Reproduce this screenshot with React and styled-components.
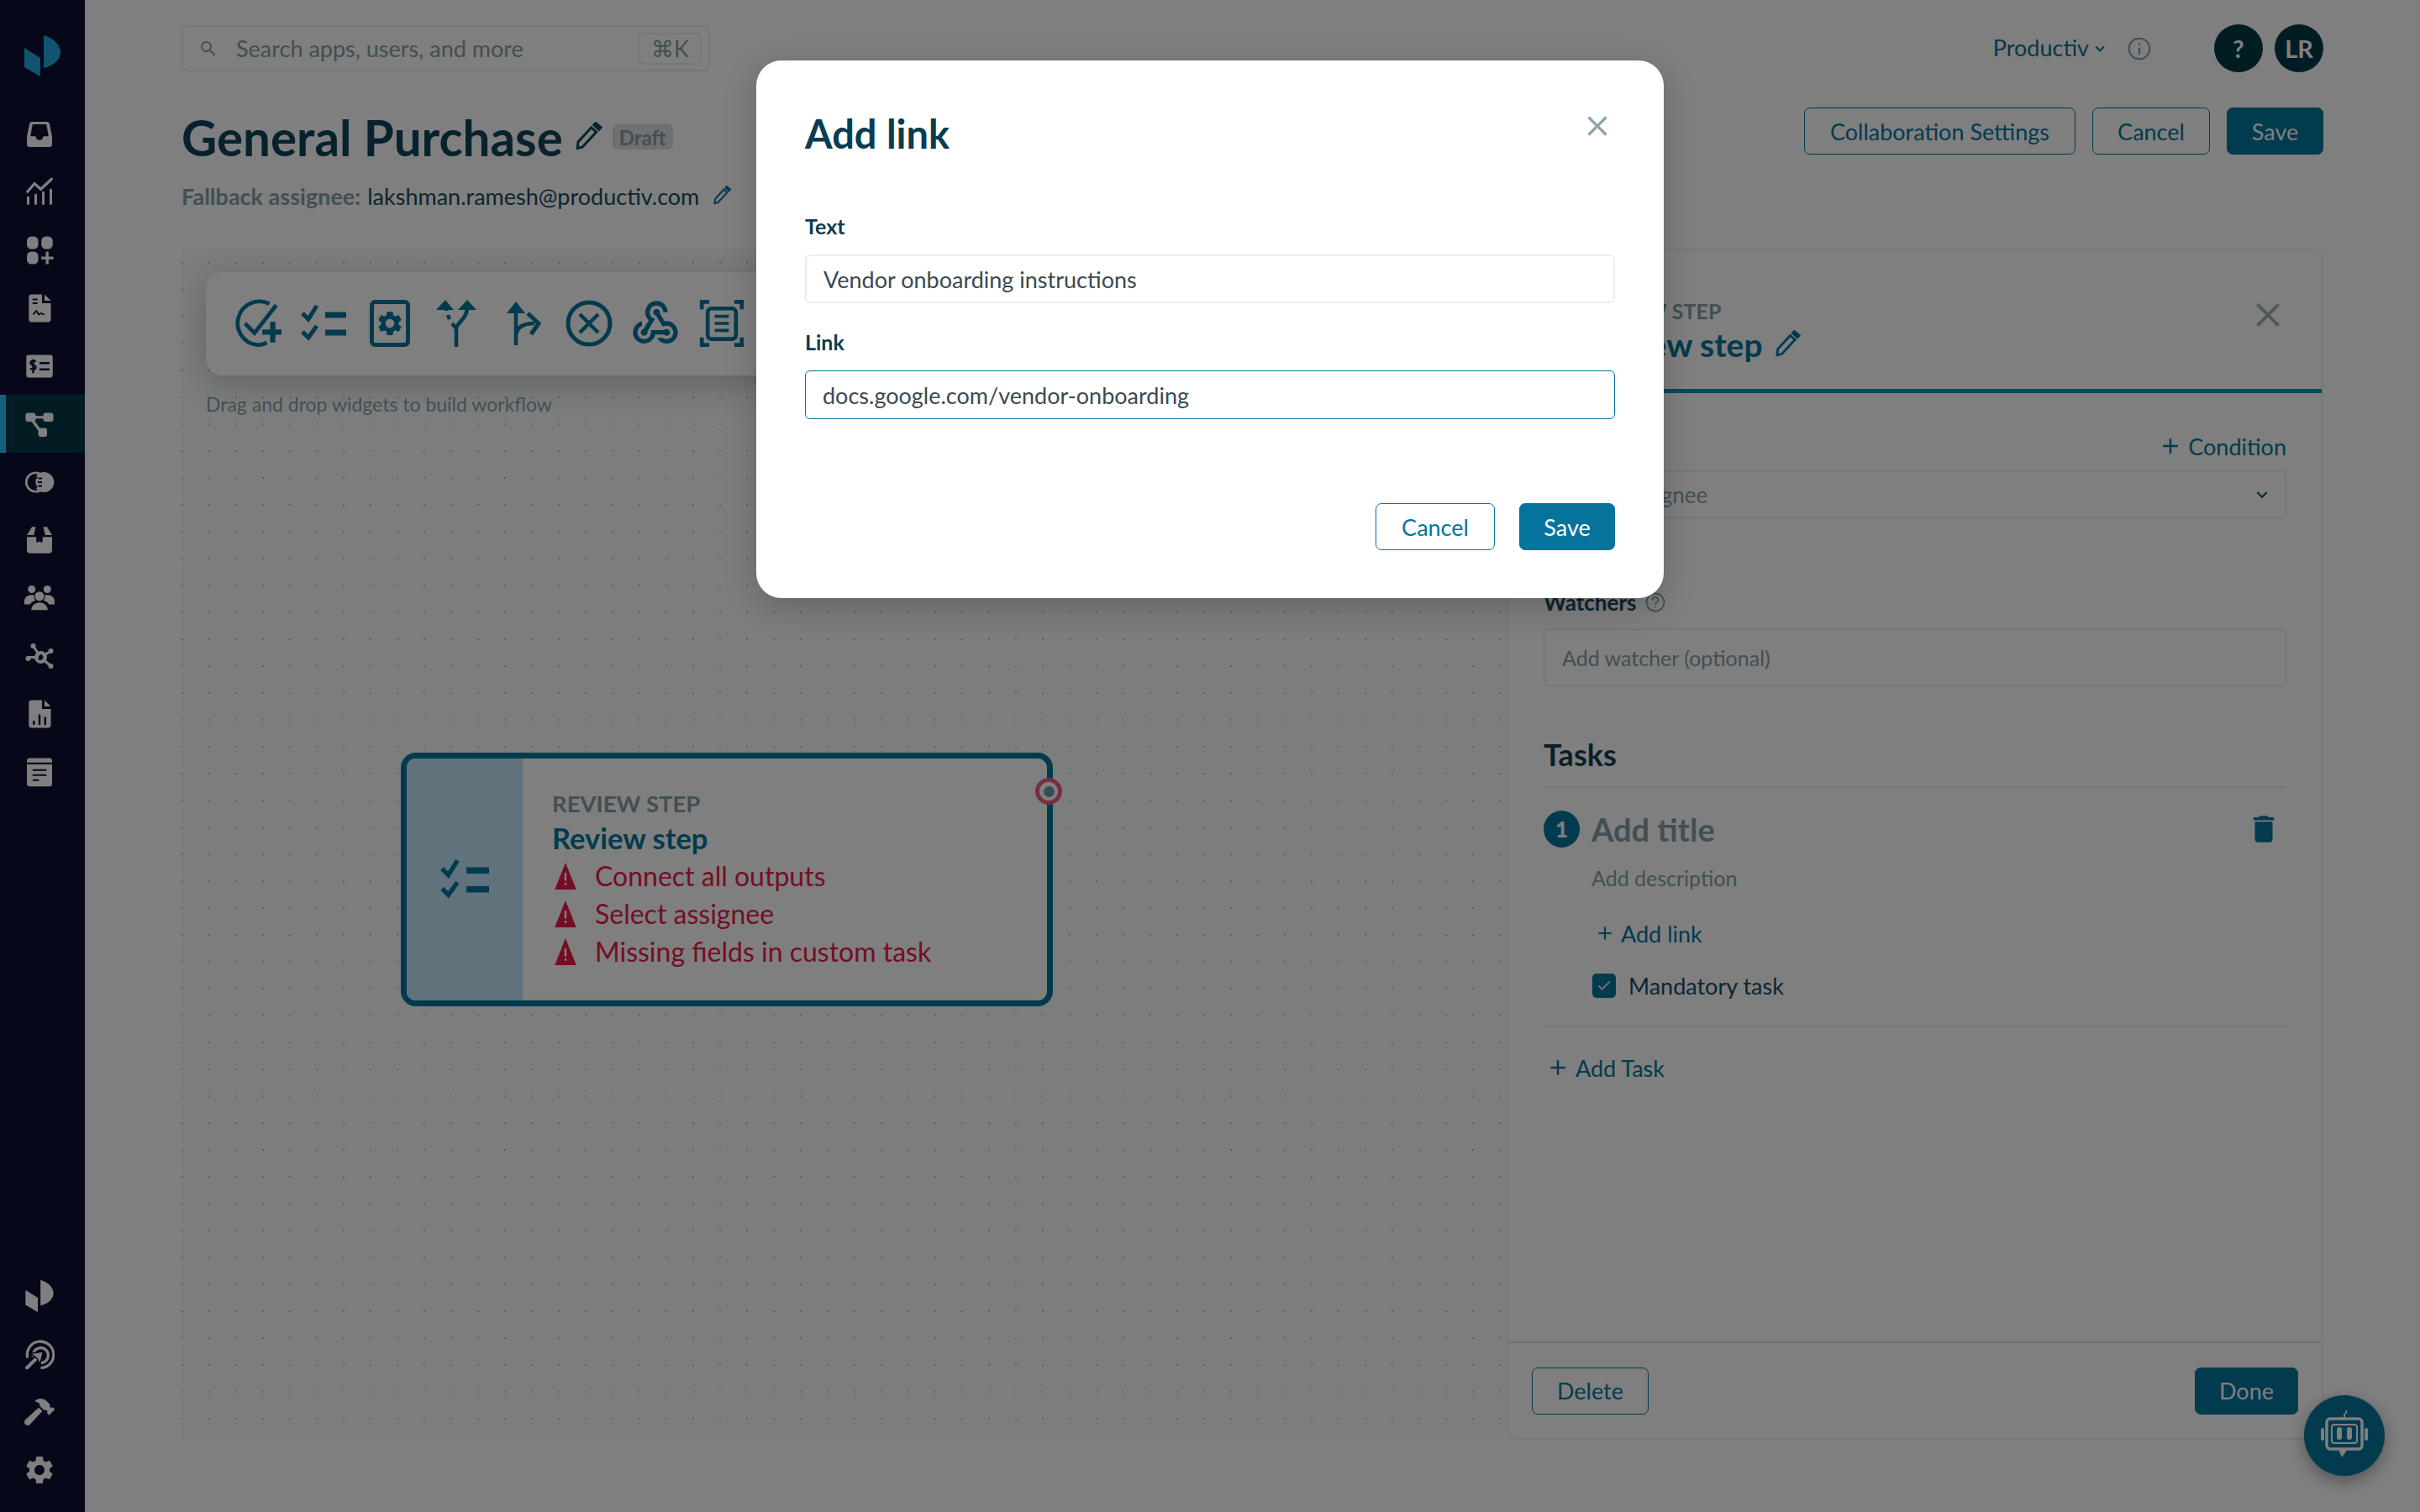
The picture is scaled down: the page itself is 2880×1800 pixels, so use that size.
import React from "react";
import styled, { createGlobalStyle } from "styled-components";
import { MdWebhook, MdDelete, MdSearch, MdKeyboardArrowDown, MdCheck, MdClose, MdAdd, MdSettings } from "react-icons/md";
import { FaHammer } from "react-icons/fa";

const TEAL = "#04749c";
const INK = "#10455a";
const MUTED = "#849ea7";

const GlobalStyle = createGlobalStyle`
  html, body { margin: 0; padding: 0; background: #fff; }
  * { box-sizing: border-box; }
  body { font-family: Lato, "Noto Sans", sans-serif; color: ${INK}; }
`;

const Page = styled.div`
  position: relative;
  display: flex;
  width: 2880px;
  height: 1800px;
  overflow: hidden;
`;

/* sidebar */
const Sidebar = styled.nav`
  width: 101px;
  flex: none;
  display: flex;
  flex-direction: column;
  background: #0c0e32;
  padding-bottom: 16px;
`;
const LogoBox = styled.div`
  height: 125px;
  padding: 42px 0 0 26px;
  display: flex;
  align-items: flex-start;
  color: #22a8e0;
`;
const NavItem = styled.div`
  height: 69px;
  display: flex;
  align-items: center;
  justify-content: center;
  padding-right: 7px;
  color: #fff;
  flex: none;
  ${(p) => p.$active && `background: #043848; box-shadow: inset 7px 0 0 #2abeff;`}
`;
const NavBottom = styled.div`
  margin-top: auto;
  display: flex;
  flex-direction: column;
`;
const Svg = styled.svg`
  width: ${(p) => p.$size || 36}px;
  height: ${(p) => p.$size || 36}px;
  display: block;
  flex: none;
`;

/* icons */
const Logo = ({ size }) => (
  <Svg $size={size} viewBox="0 0 49 49" fill="currentColor">
    <path d="M3 15l19 12v22L3 38z" />
    <path d="M26 0c12 3 20 12 20 20 0 10-10 17-20 19z" />
  </Svg>
);
const Inbox = () => (
  <Svg viewBox="0 0 24 24" fill="currentColor">
    <path fillRule="evenodd" d="M6 2h12c1 0 1.800.7 2 1.700L22 14v6c0 1.100-.9 2-2 2H4c-1.100 0-2-.9-2-2v-6L4 3.700C4.200 2.700 5 2 6 2zm.5 2L4.800 13.500H9c0 1.700 1.300 3 3 3s3-1.300 3-3h4.200L17.500 4z" />
  </Svg>
);
const Analytics = () => (
  <Svg viewBox="0 0 24 24" fill="none" stroke="currentColor" strokeLinecap="round" strokeWidth="2">
    <path d="M3 21v-5M9 21v-7M15 21v-9M21 21V10" />
    <path d="M2.500 11.500L8 5l5 4.500L21.500 1.500" strokeWidth="2.200" />
  </Svg>
);
const Apps = () => (
  <Svg viewBox="0 0 24 24" fill="currentColor">
    <rect x="2" y="1" width="9" height="10" rx="3.500" />
    <rect x="13.500" y="1" width="9" height="10" rx="3.500" />
    <rect x="2" y="13" width="9" height="10" rx="3.500" />
    <path d="M17 13h2.200v4H23v2.200h-3.800V23H17v-3.800h-3.600V17H17z" />
  </Svg>
);
const DocChart = () => (
  <Svg viewBox="0 0 24 24" fill="currentColor">
    <path fillRule="evenodd" d="M5.500 1H14v7h7v13c0 1.100-.9 2-2 2H5.500c-1.100 0-2-.9-2-2V3c0-1.100.9-2 2-2zM16 1l5 5h-5z" />
    <path d="M6.500 5h4M6.500 8h4M7 17l2.500-3 2 3 1.500-1 3 1" stroke="#0c0e32" strokeWidth="1.200" fill="none" />
  </Svg>
);
const Bill = () => (
  <Svg viewBox="0 0 24 24" fill="currentColor">
    <rect x="1.500" y="3" width="21" height="18" rx="2" />
    <path d="M9 8.500C8.500 7.500 5 7.300 5 9.300c0 2.200 4 1.400 4 3.600 0 2-3.500 1.800-4.200.7M7 6.500v11M12 9.500h8M12 14.500h8" stroke="#0c0e32" strokeWidth="1.600" fill="none" />
  </Svg>
);
const Flow = () => (
  <Svg viewBox="0 0 24 24" fill="currentColor">
    <rect x="1" y="3" width="8" height="7" rx="2" />
    <rect x="15" y="3" width="8" height="7" rx="2" />
    <rect x="11" y="15" width="7" height="7" rx="2" />
    <path d="M8 5.500h8v2H8zM7 8l6 8-1.800 1.300-6-8z" />
  </Svg>
);
const Coins = () => (
  <Svg viewBox="0 0 24 24" fill="none">
    <circle cx="9" cy="12" r="7.500" stroke="currentColor" strokeWidth="1.800" />
    <circle cx="15.500" cy="12" r="8" fill="currentColor" />
    <path d="M10 7.500c-2.500 2-2.500 7 0 9" stroke="#0c0e32" strokeWidth="1.500" />
    <path d="M11 9h3M10.500 12h3.500M11 15h3" stroke="#0c0e32" strokeWidth="1.200" />
  </Svg>
);
const Box = () => (
  <Svg viewBox="0 0 24 24" fill="currentColor">
    <path d="M6 1.500h3L7.500 8H2zM18 1.500h-3L16.500 8H22zM2 9.500h7.500V13c0 .8 1 1.200 1.600.6l.9-.8.900.8c.6.600 1.600.2 1.600-.6V9.500H22V20c0 1.400-1.100 2.500-2.500 2.500h-15C3.100 22.500 2 21.400 2 20z" />
  </Svg>
);
const People = () => (
  <Svg viewBox="0 0 24 24" fill="currentColor">
    <circle cx="5.800" cy="5" r="3" />
    <circle cx="18.200" cy="5" r="3" />
    <circle cx="12" cy="10.500" r="3.700" />
    <path d="M0 14.500c0-3 2.500-5 5.800-5 .8 0 1.400.1 2 .3-.3 1.600.1 2.900 1 4-2.200.7-3.600 1.800-4.300 3.200H0zM24 14.500c0-3-2.500-5-5.800-5-.8 0-1.400.1-2 .3.3 1.600-.1 2.900-1 4 2.200.7 3.600 1.800 4.300 3.200H24z" />
    <path d="M5.500 21.500c0-3.500 3-6 6.500-6s6.500 2.500 6.500 6z" />
  </Svg>
);
const Hub = () => (
  <Svg viewBox="0 0 24 24" fill="none" stroke="currentColor">
    <circle cx="13" cy="13" r="3.700" strokeWidth="2.600" />
    <path d="M13 13L7 4M13 13l8-5M13 13l-10 0M13 13l8 7" strokeWidth="2" />
    <circle cx="7" cy="4" r="2" fill="currentColor" stroke="none" />
    <circle cx="21" cy="8" r="2" fill="currentColor" stroke="none" />
    <circle cx="3" cy="14" r="2" fill="currentColor" stroke="none" />
    <circle cx="21" cy="20" r="2" fill="currentColor" stroke="none" />
    <circle cx="13" cy="13" r="1.800" fill="#0c0e32" stroke="none" />
  </Svg>
);
const DocBars = () => (
  <Svg viewBox="0 0 24 24" fill="currentColor">
    <path d="M5.500 1H14v7h7v13c0 1.100-.9 2-2 2H5.500c-1.100 0-2-.9-2-2V3c0-1.100.9-2 2-2zM16 1l5 5h-5z" />
    <path d="M7.500 20v-2M12 20v-7M16.500 20v-5" stroke="#0c0e32" strokeWidth="1.700" strokeLinecap="round" />
  </Svg>
);
const Article = () => (
  <Svg viewBox="0 0 24 24" fill="currentColor">
    <path d="M4 1h16c1.100 0 2 .9 2 2v1.500H2V3c0-1.100.9-2 2-2zM2 6h20v15.500c0 1.100-.9 2-2 2H4c-1.100 0-2-.9-2-2z" />
    <path d="M6.500 10.500h11M6.500 14.500h11M6.500 18.500h5" stroke="#0c0e32" strokeWidth="1.400" />
  </Svg>
);
const Target = () => (
  <Svg viewBox="0 0 24 24" fill="none" stroke="currentColor" strokeWidth="2.200">
    <path d="M2.500 15A10.500 10.500 0 1 1 13 23" />
    <path d="M7 14a6 6 0 1 1 6 5" />
    <path d="M2 23l7-7" strokeWidth="2.600" strokeLinecap="round" />
    <path d="M5 11.500l10-1.500-2.500 10-2.500-4.500z" fill="currentColor" stroke="#0c0e32" strokeWidth="1" />
  </Svg>
);
const WarnTriangle = () => (
  <Svg $size={32} viewBox="0 0 32 40" fill="currentColor">
    <path fillRule="evenodd" d="M16 0l16 40H0zM14.500 15v12h3V15zM14.500 30v3.500h3V30z" />
  </Svg>
);

const Pencil = ({ size }) => (
  <Svg $size={size} viewBox="0 0 24 24" fill="none" stroke="currentColor" strokeWidth="2">
    <path d="M3.500 21l.5-5L14.500 4.500l4 3.500L7.500 20z" />
    <path d="M16.500 2.500l1.500-1.500 4 3.500-1.500 1.700z" fill="currentColor" />
  </Svg>
);
const Checklist = ({ size }) => (
  <Svg $size={size} viewBox="0 0 54 54" fill="none" stroke="currentColor">
    <path d="M2 15l7 7L19 6M2 37l7 7 10-14" strokeWidth="5" />
    <path d="M29 17h25M29 38h25" strokeWidth="7" />
  </Svg>
);
const CheckPlus = () => (
  <Svg $size={58} viewBox="0 0 56 56" fill="none" stroke="currentColor" strokeWidth="4.500">
    <path d="M42 5.500A25 25 0 1 0 27 52.500c4 .5 9-.5 12-2.500" />
    <path d="M14 28l11 11L50 7" />
    <path d="M46 26v24M34 38h22" strokeWidth="6" />
  </Svg>
);
const GearBox = () => (
  <Svg $size={56} viewBox="0 0 48 56" fill="none">
    <rect x="2.500" y="2.500" width="43" height="51" rx="4" stroke="currentColor" strokeWidth="5" />
    <path transform="translate(6.500 10.500) scale(1.460)" fill="currentColor" d="M19.140 12.940c.04-.3.060-.610.060-.940 0-.32-.02-.64-.07-.940l2.030-1.580c.18-.14.23-.41.12-.61l-1.920-3.320c-.12-.22-.37-.29-.59-.22l-2.390.96c-.5-.38-1.030-.7-1.620-.94l-.36-2.540c-.04-.24-.24-.41-.48-.41h-3.840c-.24 0-.43.17-.47.41l-.36 2.540c-.59.24-1.130.57-1.620.94l-2.390-.96c-.22-.08-.47 0-.59.22L2.740 8.870c-.12.21-.08.47.12.61l2.030 1.580c-.05.3-.09.63-.09.94s.02.64.07.94l-2.030 1.580c-.18.14-.23.41-.12.61l1.920 3.320c.12.22.37.29.59.22l2.390-.96c.5.38 1.030.7 1.620.94l.36 2.540c.05.24.24.41.48.41h3.840c.24 0 .44-.17.47-.41l.36-2.540c.59-.24 1.130-.56 1.620-.94l2.390.96c.22.08.47 0 .59-.22l1.920-3.320c.12-.22.07-.47-.12-.61l-2.010-1.580zM12 15.600c-1.980 0-3.600-1.620-3.600-3.600s1.620-3.600 3.600-3.600 3.600 1.620 3.600 3.600-1.620 3.600-3.600 3.600z" />
  </Svg>
);
const Split = () => (
  <Svg $size={56} viewBox="0 0 48 56" fill="none" stroke="currentColor" strokeWidth="4.500">
    <path d="M24 56V34c0-6 13-12 13-24" />
    <path d="M24 34l-5-6M16 23l-2-5M12 13v-2" strokeWidth="4.500" />
    <path d="M0 12L11 0l10 12zM26 12L37 0l11 12z" fill="currentColor" stroke="none" />
  </Svg>
);
const Route = () => (
  <Svg $size={56} viewBox="0 0 38 56" fill="none" stroke="currentColor" strokeWidth="4.500">
    <path d="M11 54V8M11 44c0-10 6-16 22-16" />
    <path d="M0 16L11 2l11 14z" fill="currentColor" stroke="none" />
    <path d="M25 16l13 12-9 13" strokeWidth="5" />
  </Svg>
);
const CircleX = () => (
  <Svg $size={56} viewBox="0 0 56 56" fill="none" stroke="currentColor" strokeWidth="5">
    <circle cx="28" cy="28" r="25" />
    <path d="M17 17l22 22M39 17L17 39" strokeWidth="4.500" />
  </Svg>
);
const FrameDoc = () => (
  <Svg $size={56} viewBox="0 0 56 60" fill="none" stroke="currentColor" strokeWidth="5">
    <path d="M12 2.500H2.500V12M44 2.500h9.500V12M12 57.500H2.500V48M44 57.500h9.500V48" />
    <rect x="10" y="11" width="36" height="39" rx="5" />
    <path d="M19 21h18M19 30h18M19 39h18" strokeWidth="4" />
  </Svg>
);
const Info = ({ size, q }) => (
  <Svg $size={size} viewBox="0 0 24 24" fill="none" stroke="currentColor" strokeWidth="1.800">
    <circle cx="12" cy="12" r="10.500" />
    {q
      ? <path d="M8.500 9.500c0-5 7-4.500 7 0 0 2.500-3.500 2.500-3.500 5M12 17v1.500" />
      : <path d="M12 11v7M12 6.500v2" strokeWidth="2" />}
  </Svg>
);
const BotGlyph = () => (
  <Svg $size={60} viewBox="0 0 60 60" fill="none" stroke="currentColor">
    <path d="M30 10V4M32 0c1 2 0 3-1 4" strokeWidth="1.800" />
    <rect x="9" y="10" width="42" height="36" rx="4" strokeWidth="3.500" />
    <rect x="15" y="17" width="30" height="22" rx="3" strokeWidth="2" />
    <rect x="21" y="20" width="6" height="15" rx="3" fill="currentColor" stroke="none" />
    <rect x="33" y="20" width="6" height="15" rx="3" fill="currentColor" stroke="none" />
    <rect x="2" y="21" width="4" height="15" rx="2" fill="currentColor" stroke="none" />
    <rect x="54" y="21" width="4" height="15" rx="2" fill="currentColor" stroke="none" />
    <path d="M23 46h11l-7 10z" fill="currentColor" stroke="none" />
  </Svg>
);

/* main column */
const Main = styled.main`
  flex: 1;
  min-width: 0;
  display: flex;
  flex-direction: column;
  padding: 29px 115px 86px 115px;
`;
const TopBar = styled.div`
  height: 57px;
  display: flex;
  align-items: center;
  justify-content: space-between;
`;
const SearchBox = styled.div`
  width: 629px;
  height: 55px;
  display: flex;
  align-items: center;
  padding: 0 8px 0 18px;
  border: 2px solid #eaeded;
  border-radius: 8px;
  color: ${MUTED};
`;
const SearchText = styled.span`
  margin-left: 21px;
  flex: 1;
  font-size: 27px;
`;
const Kbd = styled.span`
  width: 75px;
  height: 38px;
  display: flex;
  align-items: center;
  justify-content: center;
  border: 2px solid #eaeded;
  border-radius: 6px;
  font-size: 27px;
`;
const TopRight = styled.div`
  display: flex;
  align-items: center;
`;
const OrgName = styled.span`
  font-size: 27px;
  padding-bottom: 3px;
  margin-left: 2px;
  color: #146c8c;
`;
const OrgCaret = styled.span`
  margin: 0 22px 0 2px;
  color: #146c8c;
  display: flex;
`;
const InfoWrap = styled.span`
  color: ${MUTED};
  margin-right: 75px;
  display: flex;
`;
const Avatar = styled.div`
  width: 58px;
  height: 57px;
  border-radius: 50%;
  background: #043848;
  color: #fff;
  font-weight: 700;
  font-size: 29px;
  display: flex;
  align-items: center;
  justify-content: center;
  margin-left: ${(p) => p.$gap || 0}px;
`;
const TitleRow = styled.div`
  margin-top: 42px;
  height: 56px;
  display: flex;
  align-items: center;
`;
const TitleGroup = styled.div`
  display: flex;
  align-items: center;
  padding-top: 14px;
`;
const Title = styled.h1`
  margin: 0;
  font-size: 58.300px;
  font-weight: 700;
  line-height: 56px;
  color: ${INK};
  white-space: nowrap;
`;
const PencilWrap = styled.span`
  display: flex;
  margin-left: ${(p) => p.$gap || 12}px;
  color: ${(p) => p.$color || INK};
`;
const Badge = styled.span`
  margin-left: 11px;
  height: 30px;
  padding: 0 8px;
  display: flex;
  align-items: center;
  border-radius: 5px;
  background: #dee1e3;
  color: ${MUTED};
  font-size: 24px;
  font-weight: 700;
`;
const Actions = styled.div`
  margin-left: auto;
  display: flex;
  gap: 20px;
`;
const Button = styled.button`
  font-family: inherit;
  height: 56px;
  width: ${(p) => p.$w}px;
  padding: 0;
  font-size: 27px;
  border-radius: 7px;
  border: 1px solid ${TEAL};
  background: ${(p) => (p.$solid ? TEAL : "#fff")};
  color: ${(p) => (p.$solid ? "#fff" : TEAL)};
`;
const FallbackRow = styled.div`
  margin-top: 34px;
  height: 30px;
  display: flex;
  align-items: center;
  font-size: 27px;
  white-space: nowrap;
`;
const FallbackLabel = styled.span`
  font-weight: 700;
  color: ${MUTED};
`;
const FallbackMail = styled.span`
  margin-left: 8px;
  color: #184a60;
`;
const Workspace = styled.div`
  margin-top: 48px;
  flex: 1;
  min-height: 0;
  display: flex;
`;

/* canvas */
const Canvas = styled.section`
  position: relative;
  flex: 1;
  min-width: 0;
  padding: 28px 0 0 29px;
  background-color: #f8fcfc;
  background-image: radial-gradient(circle at 1px 1px, #b9c2c4 1.300px, transparent 1.500px);
  background-size: 32px 32px;
  background-position: 0 16px;
`;
const Toolbar = styled.div`
  width: 900px;
  height: 123px;
  display: flex;
  align-items: center;
  padding: 0 0 2px 21px;
  border-radius: 20px;
  background: #fff;
  box-shadow: 0 10px 40px rgba(0, 0, 0, 0.22);
`;
const ToolCell = styled.div`
  width: 79px;
  display: flex;
  justify-content: center;
  color: ${TEAL};
`;
const Caption = styled.div`
  margin-top: 19px;
  font-size: 23px;
  line-height: 30px;
  color: ${MUTED};
`;
const Node = styled.article`
  position: absolute;
  left: 261px;
  top: 600px;
  width: 776px;
  height: 302px;
  display: flex;
  background: #fff;
  border: 7px solid ${TEAL};
  border-radius: 18px;
`;
const NodeBand = styled.div`
  width: 138px;
  display: flex;
  align-items: center;
  justify-content: center;
  background: #c0e4f6;
  border-radius: 10px 0 0 10px;
  color: ${TEAL};
`;
const NodeBody = styled.div`
  padding: 38px 0 0 35px;
  display: flex;
  flex-direction: column;
`;
const NodeKind = styled.div`
  font-size: 27.500px;
  font-weight: 700;
  line-height: 32px;
  color: ${MUTED};
`;
const NodeTitle = styled.div`
  font-size: 34.500px;
  font-weight: 700;
  line-height: 44px;
  margin-top: 3px;
  color: ${TEAL};
`;
const Warning = styled.div`
  display: flex;
  align-items: center;
  height: 45px;
  font-size: 32px;
  color: #ea1a46;
`;
const WarningIcon = styled.span`
  display: flex;
  width: 51px;
`;
const Port = styled.span`
  position: absolute;
  right: -18px;
  top: 23px;
  width: 32px;
  height: 32px;
  border-radius: 50%;
  border: 5px solid #e8607c;
  background: #fff;
  display: flex;
  align-items: center;
  justify-content: center;
  &::after {
    content: "";
    width: 13px;
    height: 13px;
    border-radius: 50%;
    background: #6e9aa8;
  }
`;

/* right panel */
const Panel = styled.aside`
  width: 972px;
  flex: none;
  display: flex;
  flex-direction: column;
  background: #fff;
  border: 2px solid #ecefef;
  border-radius: 14px;
`;
const PanelHeader = styled.header`
  height: 170px;
  flex: none;
  display: flex;
  justify-content: space-between;
  align-items: flex-start;
  padding: 58px 40px 0 93px;
  border-bottom: 5px solid #1690c0;
`;
const PanelKind = styled.div`
  font-size: 25px;
  font-weight: 700;
  line-height: 28px;
  color: ${MUTED};
`;
const PanelTitle = styled.div`
  display: flex;
  align-items: center;
  margin-top: 3px;
  font-size: 39px;
  font-weight: 700;
  line-height: 46px;
  color: ${TEAL};
`;
const PanelClose = styled.span`
  display: flex;
  margin-top: -5px;
  color: #9fb2b8;
`;
const PanelBody = styled.div`
  flex: 1;
  padding: 48px 42px 0 42px;
  display: flex;
  flex-direction: column;
`;
const LinkRow = styled.div`
  display: flex;
  align-items: center;
  height: 30px;
  flex: none;
  margin-top: ${(p) => p.$mt || 0}px;
  margin-left: ${(p) => p.$ml || 0}px;
  align-self: ${(p) => (p.$end ? "flex-end" : "flex-start")};
  font-size: 27px;
  color: ${TEAL};
`;
const Plus = styled.span`
  display: flex;
  margin-right: 6px;
`;
const Field = styled.div`
  flex: none;
  height: ${(p) => p.$h}px;
  margin-top: ${(p) => p.$mt}px;
  display: flex;
  align-items: center;
  justify-content: space-between;
  padding: 0 14px 0 20px;
  border: 2px solid #eaeded;
  border-radius: 6px;
  color: ${MUTED};
  font-size: ${(p) => p.$fs || 26}px;
`;
const FieldLabel = styled.div`
  flex: none;
  display: flex;
  align-items: center;
  gap: 11px;
  margin-top: 85px;
  height: 30px;
  font-size: 26px;
  font-weight: 700;
  color: #184a60;
`;
const HelpIcon = styled.span`
  display: flex;
  color: ${MUTED};
`;
const SectionTitle = styled.h2`
  flex: none;
  margin: 59px 0 0;
  height: 44px;
  line-height: 44px;
  font-size: 36px;
  font-weight: 700;
  color: #143f50;
`;
const Divider = styled.hr`
  flex: none;
  width: 100%;
  margin: ${(p) => p.$mt}px 0 0;
  border: 0;
  border-top: 2px solid #eaeded;
`;
const TaskRow = styled.div`
  flex: none;
  margin-top: 26px;
  display: flex;
  align-items: center;
`;
const TaskNumber = styled.span`
  width: 43px;
  height: 44px;
  border-radius: 50%;
  background: ${TEAL};
  color: #fff;
  font-size: 26px;
  font-weight: 900;
  display: flex;
  align-items: center;
  justify-content: center;
`;
const TaskTitle = styled.span`
  margin-left: 14px;
  flex: 1;
  font-size: 38px;
  font-weight: 700;
  color: ${MUTED};
`;
const TrashWrap = styled.span`
  display: flex;
  margin-right: 6px;
  color: ${TEAL};
`;
const TaskDesc = styled.div`
  flex: none;
  margin: 20px 0 0 57px;
  height: 30px;
  line-height: 30px;
  font-size: 25px;
  color: ${MUTED};
`;
const CheckRow = styled.div`
  flex: none;
  margin: 32px 0 0 58px;
  height: 30px;
  display: flex;
  align-items: center;
  font-size: 27px;
  color: #184a60;
`;
const CheckBox = styled.span`
  width: 28px;
  height: 29px;
  margin-right: 15px;
  border-radius: 5px;
  background: ${TEAL};
  color: #fff;
  display: flex;
  align-items: center;
  justify-content: center;
`;
const PanelFooter = styled.footer`
  flex: none;
  height: 115px;
  display: flex;
  align-items: center;
  justify-content: space-between;
  padding: 0 28px;
  border-top: 2px solid #dfe3e3;
`;
const Fab = styled.div`
  position: absolute;
  right: 42px;
  bottom: 43px;
  width: 96px;
  height: 96px;
  border-radius: 50%;
  background: ${TEAL};
  color: #fff;
  display: flex;
  align-items: center;
  justify-content: center;
  box-shadow: 0 6px 20px rgba(0, 0, 0, 0.35);
`;

/* modal */
const Overlay = styled.div`
  position: absolute;
  inset: 0;
  background: rgba(0, 0, 0, 0.5);
  display: flex;
  justify-content: center;
  align-items: flex-start;
  padding-top: 72px;
`;
const Modal = styled.div`
  width: 1080px;
  height: 640px;
  padding: 0 58px;
  display: flex;
  flex-direction: column;
  background: #fff;
  border-radius: 30px;
  box-shadow: 0 10px 40px rgba(0, 0, 0, 0.2);
`;
const ModalHead = styled.div`
  height: 182px;
  padding-top: 60px;
  display: flex;
  justify-content: space-between;
  align-items: flex-start;
`;
const ModalTitle = styled.h2`
  margin: 0;
  font-size: 47px;
  font-weight: 700;
  line-height: 54px;
  color: #0a3d50;
`;
const ModalClose = styled.span`
  display: flex;
  margin: -2px 1px 0 0;
  color: #8ea4ac;
`;
const Label = styled.label`
  display: block;
  height: 30px;
  line-height: 30px;
  font-size: 25px;
  font-weight: 700;
  color: #0a3d50;
`;
const Input = styled.div`
  flex: none;
  height: 58px;
  margin: 19px 0 31px;
  padding: 0 20px;
  display: flex;
  align-items: center;
  border: ${(p) => (p.$focus ? `1px solid ${TEAL}` : "2px solid #ebeded")};
  border-radius: 6px;
  font-size: 27px;
  color: #3a4a52;
`;
const ModalFooter = styled.div`
  margin-top: 69px;
  display: flex;
  justify-content: flex-end;
  gap: 29px;
`;

const NAV_TOP = [Inbox, Analytics, Apps, DocChart, Bill, Flow, Coins, Box, People, Hub, DocBars, Article];
const NAV_BOTTOM = [() => <Logo size={38} />, Target, () => <FaHammer size={36} />, () => <MdSettings size={40} />];
const TOOLS = [CheckPlus, () => <Checklist size={54} />, GearBox, Split, Route, CircleX, () => <MdWebhook size={64} />, FrameDoc];
const WARNINGS = ["Connect all outputs", "Select assignee", "Missing fields in custom task"];

export default function App() {
  return (
    <Page>
      <GlobalStyle />
      <Sidebar>
        <LogoBox><Logo size={49} /></LogoBox>
        {NAV_TOP.map((Icon, i) => (
          <NavItem key={i} $active={i === 5}><Icon /></NavItem>
        ))}
        <NavBottom>
          {NAV_BOTTOM.map((Icon, i) => (
            <NavItem key={i}><Icon /></NavItem>
          ))}
        </NavBottom>
      </Sidebar>

      <Main>
        <TopBar>
          <SearchBox>
            <MdSearch size={24} />
            <SearchText>Search apps, users, and more</SearchText>
            <Kbd>⌘K</Kbd>
          </SearchBox>
          <TopRight>
            <OrgName>Productiv</OrgName>
            <OrgCaret><MdKeyboardArrowDown size={22} /></OrgCaret>
            <InfoWrap><Info size={28} /></InfoWrap>
            <Avatar>?</Avatar>
            <Avatar $gap={14}>LR</Avatar>
          </TopRight>
        </TopBar>

        <TitleRow>
          <TitleGroup>
            <Title>General Purchase</Title>
            <PencilWrap><Pencil size={36} /></PencilWrap>
            <Badge>Draft</Badge>
          </TitleGroup>
          <Actions>
            <Button $w={323}>Collaboration Settings</Button>
            <Button $w={140}>Cancel</Button>
            <Button $w={115} $solid>Save</Button>
          </Actions>
        </TitleRow>

        <FallbackRow>
          <FallbackLabel>Fallback assignee:</FallbackLabel>
          <FallbackMail>lakshman.ramesh@productiv.com</FallbackMail>
          <PencilWrap $gap={15} $color={TEAL}><Pencil size={24} /></PencilWrap>
        </FallbackRow>

        <Workspace>
          <Canvas>
            <Toolbar>
              {TOOLS.map((Icon, i) => (
                <ToolCell key={i}><Icon /></ToolCell>
              ))}
            </Toolbar>
            <Caption>Drag and drop widgets to build workflow</Caption>
            <Node>
              <NodeBand><Checklist size={58} /></NodeBand>
              <NodeBody>
                <NodeKind>REVIEW STEP</NodeKind>
                <NodeTitle>Review step</NodeTitle>
                {WARNINGS.map((text) => (
                  <Warning key={text}>
                    <WarningIcon><WarnTriangle /></WarningIcon>
                    {text}
                  </Warning>
                ))}
              </NodeBody>
              <Port />
            </Node>
          </Canvas>

          <Panel>
            <PanelHeader>
              <div>
                <PanelKind>REVIEW STEP</PanelKind>
                <PanelTitle>
                  Review step
                  <PencilWrap $color={TEAL}><Pencil size={34} /></PencilWrap>
                </PanelTitle>
              </div>
              <PanelClose><MdClose size={48} /></PanelClose>
            </PanelHeader>
            <PanelBody>
              <LinkRow $end><Plus><MdAdd size={30} /></Plus>Condition</LinkRow>
              <Field $h={57} $mt={14}>
                Select assignee
                <MdKeyboardArrowDown size={26} color="#184a60" />
              </Field>
              <FieldLabel>Watchers<HelpIcon><Info size={24} q /></HelpIcon></FieldLabel>
              <Field $h={69} $mt={16} $fs={25}>Add watcher (optional)</Field>
              <SectionTitle>Tasks</SectionTitle>
              <Divider $mt={16} />
              <TaskRow>
                <TaskNumber>1</TaskNumber>
                <TaskTitle>Add title</TaskTitle>
                <TrashWrap><MdDelete size={42} /></TrashWrap>
              </TaskRow>
              <TaskDesc>Add description</TaskDesc>
              <LinkRow $mt={36} $ml={60}><Plus><MdAdd size={26} /></Plus>Add link</LinkRow>
              <CheckRow>
                <CheckBox><MdCheck size={20} /></CheckBox>
                Mandatory task
              </CheckRow>
              <Divider $mt={33} />
              <LinkRow $mt={33} $ml={2}><Plus><MdAdd size={30} /></Plus>Add Task</LinkRow>
            </PanelBody>
            <PanelFooter>
              <Button $w={139}>Delete</Button>
              <Button $w={123} $solid>Done</Button>
            </PanelFooter>
          </Panel>
        </Workspace>
      </Main>

      <Fab><BotGlyph /></Fab>

      <Overlay>
        <Modal>
          <ModalHead>
            <ModalTitle>Add link</ModalTitle>
            <ModalClose><MdClose size={40} /></ModalClose>
          </ModalHead>
          <Label>Text</Label>
          <Input>Vendor onboarding instructions</Input>
          <Label>Link</Label>
          <Input $focus>docs.google.com/vendor-onboarding</Input>
          <ModalFooter>
            <Button $w={142}>Cancel</Button>
            <Button $w={114} $solid>Save</Button>
          </ModalFooter>
        </Modal>
      </Overlay>
    </Page>
  );
}
